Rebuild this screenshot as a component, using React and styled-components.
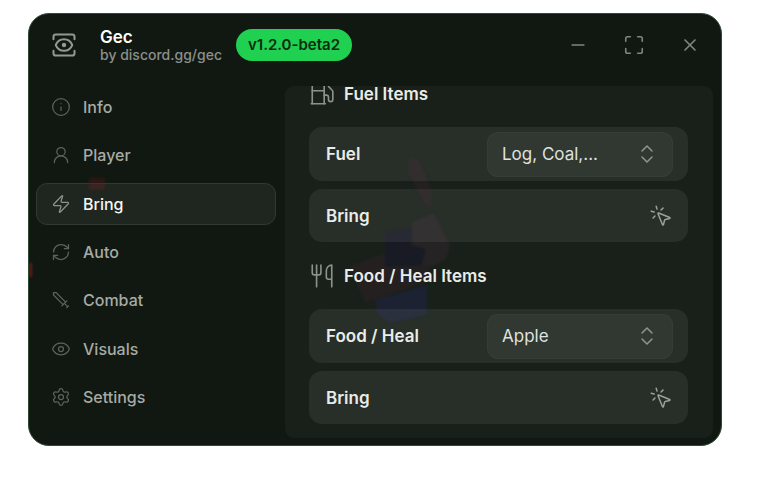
import React from "react";
import styled, { createGlobalStyle } from "styled-components";
import {
    ChevronsUpDown,
    Eye,
    Fuel,
    Info,
    Maximize,
    Minus,
    MousePointerClick,
    RefreshCw,
    Settings,
    Sword,
    UserRound,
    Utensils,
    View,
    X,
    Zap,
} from "lucide-react";

const GlobalStyle = createGlobalStyle`
    * {
        box-sizing: border-box;
    }
    body {
        margin: 0;
        background: #fff;
        font-family: Inter, "Liberation Sans", sans-serif;
    }
    button, select {
        font-family: inherit;
        color: inherit;
        border: 0;
        background: none;
        padding: 0;
        cursor: pointer;
    }
    svg {
        flex-shrink: 0;
    }
`;

const StyledPage = styled.div`
    display: flex;
    height: 100vh;
    padding: 13px 46px 40px 28px;
`;

const StyledWindow = styled.div`
    position: relative;
    isolation: isolate;
    flex: 1;
    min-width: 0;
    display: flex;
    flex-direction: column;
    overflow: hidden;
    border: 1px solid #2f4a33;
    border-radius: 21px;
    background: #111811;
    color: #e9ece9;
`;

const StyledScene = styled.svg`
    position: absolute;
    inset: 0;
    z-index: -1;
`;

const StyledHeader = styled.header`
    display: flex;
    align-items: center;
    height: 72px;
    padding: 0 16px 10px 21px;
    color: #929892;
`;

const StyledTitles = styled.div`
    margin: 0 14px 0 22px;
    padding-top: 2px;
`;

const StyledTitle = styled.h1`
    margin: 0;
    font-size: 17px;
    font-weight: 600;
    line-height: 18px;
    color: #fff;
`;

const StyledSubtitle = styled.p`
    margin: 0;
    font-size: 14px;
    font-weight: 500;
    line-height: 18px;
    color: #8b8f8b;
`;

const StyledTag = styled.span`
    padding: 0 12px;
    border-radius: 16px;
    background: #20d050;
    color: #092c12;
    font-size: 15px;
    font-weight: 600;
    line-height: 32px;
`;

const StyledControls = styled.div`
    display: flex;
    gap: 26px;
    margin-left: auto;
`;

const StyledControl = styled.button`
    display: grid;
    place-items: center;
    width: 30px;
    height: 30px;
    color: #7f857f;
`;

const StyledBody = styled.div`
    flex: 1;
    min-height: 0;
    display: flex;
    gap: 9px;
    padding: 0 8px 7px 7px;
`;

const StyledNav = styled.nav`
    flex: 0 0 240px;
    display: flex;
    flex-direction: column;
    justify-content: space-between;
    padding-bottom: 20px;
`;

const StyledNavItem = styled.button`
    display: flex;
    align-items: center;
    gap: 12px;
    height: 42px;
    padding: 0 14px;
    border: 1px solid ${({ $active }) => ($active ? "#323932" : "transparent")};
    border-radius: 11px;
    background: ${({ $active }) =>
        $active ? "rgba(255, 255, 255, 0.06)" : "none"};
    color: ${({ $active }) => ($active ? "#f5f7f5" : "#a6aba6")};
    font-size: 16px;
    font-weight: 500;

    svg {
        color: ${({ $active }) => ($active ? "#8b918b" : "#5c625c")};
    }
`;

// The lucide sword points to the top right, the tab wants it to the top left
const StyledSword = styled(Sword)`
    transform: scaleX(-1);
`;

const StyledPanel = styled.main`
    flex: 1;
    min-width: 0;
    display: flex;
    flex-direction: column;
    justify-content: flex-end;
    gap: 8px;
    overflow: hidden;
    padding: 0 25px 14px 24px;
    border-radius: 9px;
    background: rgba(255, 255, 255, 0.035);
`;

const StyledSectionTitle = styled.h2`
    flex-shrink: 0;
    display: flex;
    align-items: center;
    gap: 9px;
    height: 51px;
    margin: 0;
    font-size: 17px;
    font-weight: 600;

    svg {
        color: #8b918b;
    }
`;

const StyledRow = styled.div`
    flex-shrink: 0;
    display: flex;
    align-items: center;
    justify-content: space-between;
    height: 54px;
    padding: 0 15px 0 17px;
    border-radius: 13px;
    background: rgba(255, 255, 255, 0.065);
    font-size: 17px;
    font-weight: 600;
`;

const StyledActionRow = styled(StyledRow)`
    height: 53px;

    svg {
        color: #9aa09a;
    }
`;

const StyledSelectBox = styled.div`
    display: grid;
    align-items: center;
    width: 186px;

    > * {
        grid-area: 1 / 1;
    }
    svg {
        justify-self: end;
        margin-right: 14px;
        color: #8f958f;
        pointer-events: none;
    }
`;

const StyledSelect = styled.select`
    appearance: none;
    height: 45px;
    padding: 0 44px 0 14px;
    border: 1px solid rgba(255, 255, 255, 0.03);
    border-radius: 11px;
    background: rgba(255, 255, 255, 0.045);
    color: #dfe2df;
    font-size: 17px;
    font-weight: 400;
`;

const tabs = [
    { label: "Info", Icon: Info },
    { label: "Player", Icon: UserRound },
    { label: "Bring", Icon: Zap },
    { label: "Auto", Icon: RefreshCw },
    { label: "Combat", Icon: StyledSword },
    { label: "Visuals", Icon: Eye },
    { label: "Settings", Icon: Settings },
];

const sections = [
    {
        id: "fuel",
        title: "Fuel Items",
        Icon: Fuel,
        label: "Fuel",
        value: "Log, Coal,...",
    },
    {
        id: "food",
        title: "Food / Heal Items",
        Icon: Utensils,
        label: "Food / Heal",
        value: "Apple",
    },
];

// Faint game scene that shines through the window
const Scene = () => (
    <StyledScene width="694" height="433" aria-hidden="true">
        <defs>
            <filter id="soft" colorInterpolationFilters="sRGB">
                <feGaussianBlur stdDeviation="1" />
            </filter>
        </defs>
        <g filter="url(#soft)">
            <path d="M60 164h16v12H60z" fill="#2c1714" />
            <path d="M0 249h3v14H0z" fill="#5a1d18" />
            <path d="M380 142l10 4 12 28 0 20-8-6-14-28z" fill="#1c1818" />
            <path d="M356 218l28-5 24 18-6 22-46 5z" fill="#10131d" />
            <path d="M383 208l22-9 16 32-4 14-26 14 6-24-14-4z" fill="#1f1b1e" />
            <path d="M320 252l36-13 0 14 46-2-2 16-64 22z" fill="#1c1818" />
            <path d="M346 286l52-15v30l-38 8-12-10z" fill="#141a2b" />
        </g>
    </StyledScene>
);

const Section = ({ section }) => {
    const { id, title, Icon, label, value } = section;

    return (
        <>
            <StyledSectionTitle>
                <Icon size={26} strokeWidth={1.5} />
                {title}
            </StyledSectionTitle>
            <StyledRow>
                <label htmlFor={id}>{label}</label>
                <StyledSelectBox>
                    <StyledSelect id={id}>
                        <option>{value}</option>
                    </StyledSelect>
                    <ChevronsUpDown size={24} strokeWidth={1.5} />
                </StyledSelectBox>
            </StyledRow>
            <StyledActionRow as="button" type="button">
                Bring
                <MousePointerClick size={24} strokeWidth={1.5} />
            </StyledActionRow>
        </>
    );
};

const App = () => {
    const [active, setActive] = React.useState("Bring");

    return (
        <StyledPage>
            <GlobalStyle />
            <StyledWindow>
                <Scene />
                <StyledHeader>
                    <View size={28} strokeWidth={1.75} />
                    <StyledTitles>
                        <StyledTitle>Gec</StyledTitle>
                        <StyledSubtitle>by discord.gg/gec</StyledSubtitle>
                    </StyledTitles>
                    <StyledTag>v1.2.0-beta2</StyledTag>
                    <StyledControls>
                        <StyledControl aria-label="Minimize">
                            <Minus size={20} strokeWidth={2} />
                        </StyledControl>
                        <StyledControl aria-label="Maximize">
                            <Maximize size={22} strokeWidth={1.75} />
                        </StyledControl>
                        <StyledControl aria-label="Close">
                            <X size={20} strokeWidth={2} />
                        </StyledControl>
                    </StyledControls>
                </StyledHeader>
                <StyledBody>
                    <StyledNav>
                        {tabs.map(({ label, Icon }) => (
                            <StyledNavItem
                                key={label}
                                type="button"
                                $active={label === active}
                                onClick={() => setActive(label)}
                            >
                                <Icon size={20} strokeWidth={1.5} />
                                {label}
                            </StyledNavItem>
                        ))}
                    </StyledNav>
                    <StyledPanel>
                        {sections.map((section) => (
                            <Section key={section.id} section={section} />
                        ))}
                    </StyledPanel>
                </StyledBody>
            </StyledWindow>
        </StyledPage>
    );
};

export default App;
